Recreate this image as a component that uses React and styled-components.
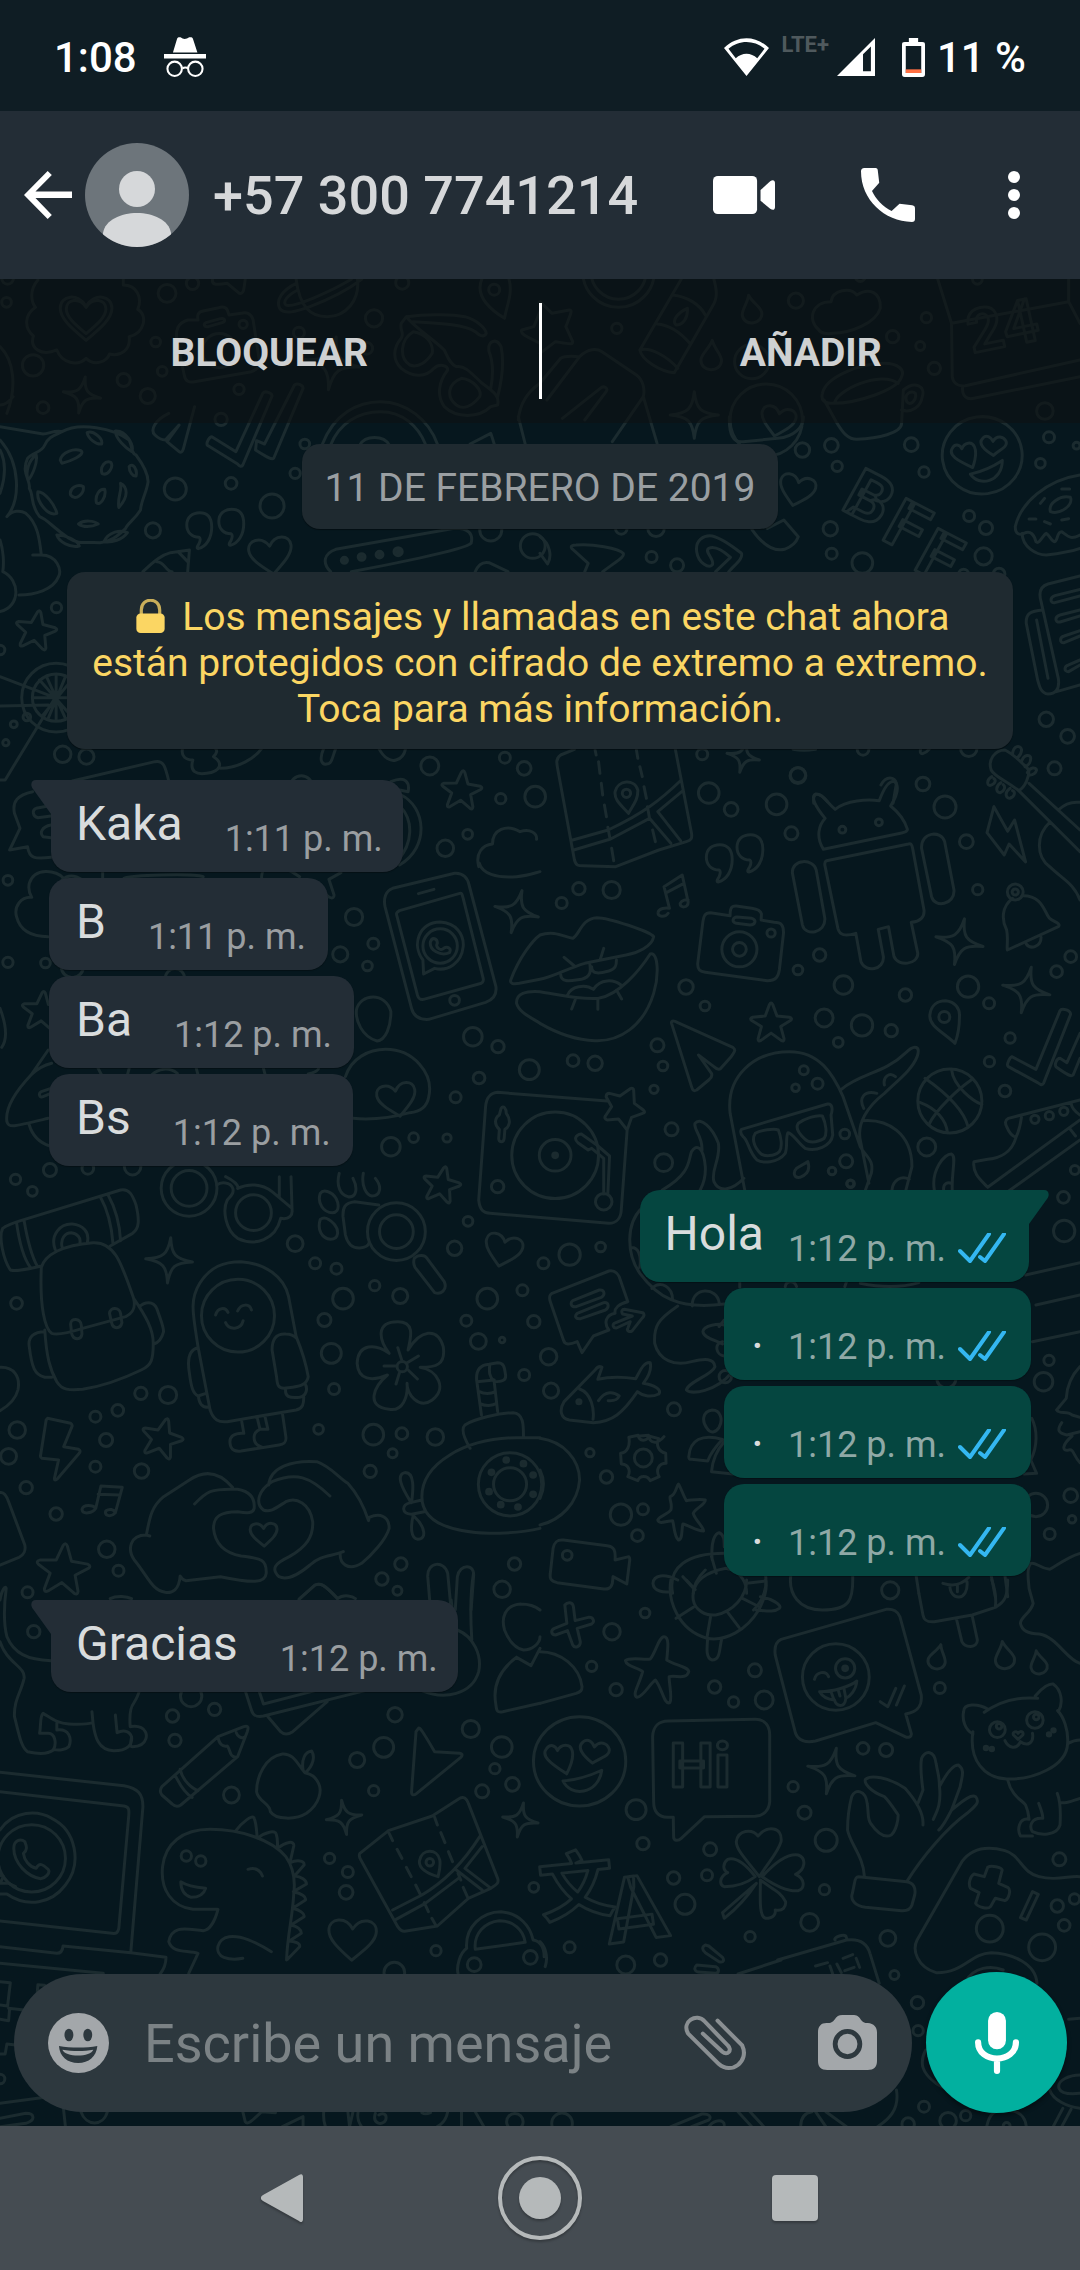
import React from 'react';
import styled, { createGlobalStyle } from 'styled-components';

const GlobalStyle = createGlobalStyle`
  * {
    box-sizing: border-box;
  }

  body {
    margin: 0;
    background: #06171e;
    font-family: Roboto, 'Noto Sans', sans-serif;
  }

  button {
    display: flex;
    align-items: center;
    justify-content: center;
    padding: 0;
    border: none;
    background: none;
    color: inherit;
    font-family: inherit;
    cursor: pointer;
  }

  svg {
    display: block;
    flex-shrink: 0;
  }
`;

const Page = styled.div`
  display: flex;
  flex-direction: column;
  min-height: 100vh;
`;

const StatusBar = styled.div`
  display: flex;
  align-items: center;
  height: 111px;
  padding: 3px 54px 0;
  background: #0f1d24;
  color: #fff;
  font-size: 42px;
  font-weight: 500;
`;

const StatusGroup = styled.div`
  display: flex;
  align-items: center;
  gap: ${props => props.$gap}px;
  margin-left: ${props => (props.$end ? 'auto' : '0')};
`;

const NetworkType = styled.span`
  align-self: flex-start;
  margin-right: -4px;
  color: #4f595d;
  font-size: 22px;
  line-height: 14px;
  font-weight: 700;
`;

const Header = styled.header`
  display: flex;
  align-items: center;
  height: 168px;
  padding: 0 51px 0 24px;
  background: #232d36;
  color: #fff;
`;

const BackLink = styled.button`
  margin-right: 13px;
`;

const Title = styled.h1`
  flex: 1;
  margin: 0 0 0 23px;
  color: #d6d8da;
  font-size: 54px;
  font-weight: 500;
  white-space: nowrap;
`;

const HeaderActions = styled.div`
  display: flex;
  gap: 78px;
`;

const HeaderButton = styled.button`
  width: ${props => (props.$narrow ? 30 : 66)}px;
  height: 66px;
`;

const Chat = styled.main`
  position: relative;
  display: flex;
  flex: 1;
  flex-direction: column;
  overflow: hidden;
  background: #06171e;
`;

const Wallpaper = styled.svg`
  position: absolute;
  inset: 0;
  width: 100%;
  height: 100%;
  fill: none;
  stroke: #1b2b2f;
  stroke-width: 3;
  stroke-linecap: round;
  stroke-linejoin: round;

  & * {
    vector-effect: non-scaling-stroke;
  }
`;

const ContactActions = styled.div`
  position: relative;
  display: flex;
  align-items: center;
  height: 144px;
  background: rgba(13, 17, 18, 0.6);
`;

const ContactAction = styled.button`
  flex: 1;
  height: 96px;
  padding-top: 4px;
  color: #cfd1d2;
  font-size: 39px;
  font-weight: 700;
`;

const Divider = styled.div`
  width: 3px;
  height: 96px;
  background: #fff;
`;

const Conversation = styled.div`
  position: relative;
  display: flex;
  flex: 1;
  flex-direction: column;
  padding: 21px 49px 24px;
`;

const DateChip = styled.div`
  align-self: center;
  padding: 4px 23px 0;
  border-radius: 18px;
  background: #1f2a30;
  box-shadow: 0 1px 1px rgba(0, 0, 0, 0.4);
  color: #9a9fa2;
  font-size: 39px;
  line-height: 81px;
`;

const Notice = styled.p`
  align-self: center;
  max-width: 946px;
  margin: 43px 0 7px;
  padding: 22px 16px 17px;
  border-radius: 18px;
  background: #1f2a30;
  box-shadow: 0 1px 1px rgba(0, 0, 0, 0.4);
  color: #fbd663;
  font-size: 39px;
  line-height: 46px;
  text-align: center;

  svg {
    display: inline-block;
    margin: 0 7px 0 6px;
    vertical-align: -3px;
  }
`;

const MessageGroup = styled.div`
  display: flex;
  flex-direction: column;
  align-items: ${props => (props.$own ? 'flex-end' : 'flex-start')};
  gap: 6px;
  margin-top: 24px;
`;

const Bubble = styled.div`
  position: relative;
  display: flex;
  align-items: flex-end;
  gap: ${props => (props.$own ? 24 : 42)}px;
  margin: 0 ${props => (props.$tail ? 2 : 0)}px;
  padding-top: 16px;
  padding-bottom: 12px;
  padding-left: ${props => (props.$tail ? 25 : 27)}px;
  padding-right: ${props => (props.$own ? 3 : 0) + (props.$tail ? 20 : 22)}px;
  border-radius: 20px;
  border-top-left-radius: ${props => (props.$tail && !props.$own ? 0 : 20)}px;
  border-top-right-radius: ${props => (props.$tail && props.$own ? 0 : 20)}px;
  background: ${props => (props.$own ? '#054640' : '#232d36')};
  box-shadow: 0 1px 1px rgba(0, 0, 0, 0.3);
`;

const Tail = styled.svg`
  position: absolute;
  top: 0;
  ${props => (props.$own ? 'right: -20px; transform: scaleX(-1);' : 'left: -20px;')}
  fill: ${props => (props.$own ? '#054640' : '#232d36')};
`;

const MessageText = styled.span`
  margin-bottom: 8px;
  color: #d9dcdd;
  font-size: 48px;
  line-height: 56px;
`;

const MessageTime = styled.time`
  display: flex;
  align-items: center;
  gap: 12px;
  color: ${props => (props.$own ? '#8fa9a6' : '#9a9ea1')};
  font-size: 36px;
  line-height: 42px;
`;

const Composer = styled.form`
  position: relative;
  display: flex;
  align-items: center;
  gap: 14px;
  padding: 0 13px 13px 14px;
`;

const ComposerField = styled.div`
  display: flex;
  flex: 1;
  align-items: center;
  min-width: 0;
  height: 138px;
  padding: 0 35px 0 34px;
  border-radius: 69px;
  background: #2d383e;
`;

const ComposerInput = styled.input`
  flex: 1;
  min-width: 0;
  margin: 0 34px 0 35px;
  padding: 2px 0 0;
  border: none;
  outline: none;
  background: none;
  color: #d9dcdd;
  font-family: inherit;
  font-size: 54px;

  &::placeholder {
    color: #7b8285;
    opacity: 1;
  }
`;

const AttachButtons = styled.div`
  display: flex;
  gap: 71px;
`;

const MicButton = styled.button`
  width: 141px;
  height: 141px;
  border-radius: 50%;
  background: #02b09f;
  box-shadow: 0 3px 4px rgba(0, 0, 0, 0.4);
`;

const NavBar = styled.nav`
  display: flex;
  align-items: center;
  justify-content: center;
  gap: 165px;
  height: 144px;
  background: #454c52;
  color: #b5b9ba;
`;

const NavButton = styled.button`
  width: 90px;
  height: 90px;
  filter: drop-shadow(0 2px 1px rgba(0, 0, 0, 0.25));
`;

const Icon = ({ w, h, box, children }) => (
  <svg width={w} height={h} viewBox={box} preserveAspectRatio="none" fill="currentColor" aria-hidden="true">
    {children}
  </svg>
);

/* Doodles that repeat over the wallpaper, drawn around 0,0 in a 100 unit box */
const shapes = {
  heart: 'M0 44C-30 18-50 0-50-20C-50-46-16-52 0-24C16-52 50-46 50-20C50 0 30 18 0 44Z',
  spark: 'M0-50C4-13 13-4 50 0C13 4 4 13 0 50C-4 13-13 4-50 0C-13-4-4-13 0-50Z',
  star: 'M-4-46Q0-54 4-46L14-18L44-15Q52-12 46-7L23 8L31 38Q31 46 24 42L0 24L-24 42Q-31 46-31 38L-23 8L-46-7Q-52-12-44-15L-14-18Z',
  drop: 'M0-50C8-22 34-2 34 18C34 38 18 50 0 50C-18 50-34 38-34 18C-34-2-8-22 0-50Z',
  quote: 'M0 18C-20 18-33 4-33-16C-33-38-18-50 2-50C24-50 34-34 34-10C34 20 20 44-2 50C-8 50-4 42 0 36Q6 22 0 18Z',
  face: 'M0-50A50 50 0 1 1 0 50A50 50 0 1 1 0-50ZM-14 14C-32 2-42-6-36-14C-32-20-26-18-24-12C-20-20-10-20-8-12C-6-4-10 6-14 14ZM14 2C4-6-4-16 4-22C9-26 14-22 16-16C22-24 30-20 32-14C34-6 22-4 14 2ZM-18 22Q4 20 24 10C20 38-10 40-18 22Z',
};

const tiles = [
  {
    x: 0,
    y: 0,
    dots: [[22, 835, 17], [19, 907, 14], [485, 880, 26], [559, 850, 18], [452, 1026, 14], [96, 1096, 31], [359, 1140, 19], [471, 1114, 14], [429, 1188, 22], [125, 1223, 17], [694, 1168, 15], [868, 998, 16], [1086, 955, 25], [1168, 848, 19], [1065, 1045, 17], [642, 1258, 18], [706, 973, 12], [637, 1052, 50], [1435, 869, 16]],
    stamps: [['heart', 250, 955, 150], ['heart', 250, 950, 115], ['spark', 238, 1185, 110, 10], ['spark', 965, 1090, 160, 8]],
    paths: [
      'M110 840C85 870 90 905 103 922C70 945 70 985 97 1008C85 1045 120 1070 165 1050C180 1090 225 1100 250 1075C275 1100 310 1085 318 1062C350 1070 380 1050 375 1010C420 1000 430 945 400 928C415 890 395 855 358 855V838',
      'M545 960C515 970 510 990 513 1020L535 1125C538 1145 550 1148 565 1145L730 1115C750 1108 758 1095 752 1075L735 960C730 940 715 935 700 940L665 945L660 930C655 920 645 920 635 923L590 933C575 936 572 945 575 960ZM598 968L640 956C655 953 655 965 645 968L605 980C592 982 590 972 598 968Z',
      'M860 838C870 920 900 950 950 950C1005 950 1045 900 1038 838M860 850C820 870 800 900 812 925C825 945 860 935 900 920C950 900 1010 870 1050 838M865 870C835 885 820 905 830 915C850 925 960 875 1020 838',
      'M617 840C615 855 630 855 660 850L695 880C708 882 708 870 712 838',
      'M1400 835C1380 880 1410 920 1465 955C1470 920 1490 880 1478 838',
      'M1568 935L1550 980L1515 990C1510 1000 1520 1005 1568 1030M1505 1260C1510 1200 1540 1170 1568 1150',
      'M1180 950C1250 940 1320 945 1350 950C1385 960 1410 985 1412 1000C1405 1015 1390 1005 1380 995C1350 975 1290 970 1200 965M1165 970C1160 990 1175 1000 1165 1015C1140 1045 1140 1080 1165 1105C1195 1130 1235 1135 1260 1105C1275 1090 1300 1095 1300 1110C1270 1150 1270 1190 1290 1220C1325 1255 1390 1255 1425 1220L1445 1215C1450 1190 1440 1180 1400 1150C1360 1110 1345 1095 1325 1100C1305 1090 1300 1070 1290 1050C1250 1010 1200 980 1180 950ZM1200 995C1235 1000 1260 1030 1255 1060C1240 1085 1215 1105 1190 1095C1160 1075 1160 1020 1200 995ZM1340 1135C1375 1140 1400 1170 1393 1190C1370 1220 1345 1230 1325 1215C1295 1190 1300 1150 1340 1135ZM1425 1165C1435 1110 1430 1080 1420 1055C1415 1025 1440 1010 1455 1040C1465 1090 1455 1150 1445 1190',
      'M0 1040C40 1080 50 1160 20 1240M0 1215Q20 1215 38 1190',
    ],
  },
  {
    x: 540,
    y: 0,
    dots: [[743, 902, 22], [1024, 1010, 18], [1122, 953, 15], [1104, 1038, 13], [1145, 1105, 18], [223, 985, 15], [1466, 1233, 24], [1270, 838, 14], [930, 830, 14], [228, 815, 104], [228, 815, 80], [615, 1085, 50], [657, 1260, 105]],
    stamps: [['drop', 613, 927, 84, -10], ['drop', 498, 1065, 88, 3], ['spark', 448, 1245, 140, 0], ['heart', 690, 1265, 100, 12]],
    words: [['24', 1255, 1060, 180, -12]],
    paths: [
      'M410 838L290 1050C295 1080 350 1115 390 1118L500 920C520 890 510 860 505 838M385 885C430 890 465 915 480 945M340 972C380 975 410 1000 435 1030M290 1050C320 1040 370 1070 400 1105M428 925C405 935 380 960 395 975C415 975 430 955 428 925Z',
      'M810 990C775 960 790 905 845 905C850 870 900 860 920 885C960 860 990 880 988 925C975 970 900 1000 850 1000C835 1003 815 1000 810 990Z',
      'M1155 838L1195 970L1197 1130C1200 1150 1215 1160 1235 1157L1568 1080M1195 970L1535 905V838M1535 905L1568 970M1227 1160C1225 1190 1240 1200 1260 1195L1568 1130',
      'M0 905L35 940L85 930C95 930 90 940 75 980L95 1025C95 1035 85 1032 45 1025L0 1060',
      'M0 1150L60 1075C75 1065 100 1070 115 1070C140 1045 165 1045 180 1055L280 1125C300 1140 305 1170 300 1190L210 1325M115 1070L20 1200M65 1255L175 1165C185 1155 200 1165 192 1175L130 1260M300 1190L340 1330',
      'M820 1180C830 1130 930 1090 1000 1090C1040 1090 1060 1110 1050 1130C1040 1170 920 1210 850 1210C825 1210 815 1200 820 1180ZM855 1210C860 1170 990 1110 1040 1150M825 1200L860 1265C880 1300 895 1318 920 1318C980 1315 1050 1300 1050 1270L1055 1170C1090 1140 1120 1160 1110 1190C1105 1220 1080 1240 1050 1230M1065 1205C1055 1180 1080 1170 1090 1180C1095 1200 1075 1220 1065 1205Z',
    ],
  },
  {
    x: 0,
    y: 420,
    dots: [[509, 207, 32], [671, 190, 17], [790, 258, 35], [857, 160, 15], [885, 72, 14], [444, 331, 22], [164, 563, 15], [182, 1003, 24], [251, 1010, 22], [78, 891, 11], [40, 913, 10], [17, 968, 9], [0, 690, 14], [1425, 330, 32], [1547, 378, 36], [1466, 1013, 16], [1248, 1038, 26], [1522, 1045, 20], [163, 833, 69], [163, 833, 100]],
    fills: [[1000, 421, 9], [1050, 411, 10], [1102, 404, 10], [1156, 395, 12]],
    stamps: [['heart', 787, 408, 124, -8], ['quote', 578, 332, 108, 0], ['quote', 671, 322, 108, 0], ['star', 104, 632, 122, 10]],
    paths: [
      'M180 35C230 5 330 25 375 60C385 80 380 100 395 105C420 140 430 165 430 185C425 220 410 240 408 270C390 300 370 310 365 325C340 350 320 365 290 368C250 365 230 375 200 355C150 320 140 300 115 290C85 250 100 230 85 205C90 180 60 160 80 115C95 95 120 100 130 75C140 50 160 45 180 35Z',
      'M175 120C180 95 215 85 235 92C250 105 200 125 180 130ZM253 38C270 30 300 55 295 72C280 75 255 55 253 38ZM335 33C365 30 390 75 383 95C365 85 335 55 335 33ZM296 160C290 140 305 120 322 127C330 140 315 170 296 160ZM375 140C385 125 400 150 395 168C385 170 375 155 375 140ZM205 225C200 205 225 190 242 200C245 220 220 245 205 225ZM280 248C275 225 290 205 304 208C310 230 290 260 280 248ZM350 190C370 200 375 230 345 262C340 230 355 215 350 190ZM110 215C130 215 160 255 165 280C140 290 105 245 110 215ZM228 312C245 298 275 303 285 312C265 322 240 322 228 312ZM165 345C190 345 225 360 230 378C205 385 170 365 165 345ZM302 365C315 335 350 328 370 338C355 360 325 368 302 365ZM105 105C110 125 95 165 82 180C72 155 85 120 105 105Z',
      'M615 50L685 95L763 -80C770 -90 790 -80 790 -72L705 135C700 142 695 138 690 132L602 76C598 68 608 50 615 50ZM745 62L768 72L855 -105C865 -112 880 -105 880 -95L795 114C790 120 780 115 742 90Z',
      'M935 75C970 -20 1040 -55 1105 -55C1180 -55 1245 0 1270 72M960 75C985 10 1040 -25 1105 -25C1170 -25 1215 20 1235 72M1045 75C1060 45 1115 45 1130 75',
      'M490 -20C450 0 435 30 450 45C465 60 475 60 480 60L520 15L485 65L520 95Q528 100 532 88L565 -40',
      'M415 455C450 420 470 405 495 398L550 390L545 455M455 425C480 425 480 455 500 455M517 395L545 425',
      'M960 455C935 430 940 400 975 388L1320 325C1360 325 1375 340 1368 370C1350 390 1100 440 1020 455',
      'M0 20L125 42C145 40 160 30 180 35M20 290C60 240 60 130 0 60M0 90C15 120 20 160 0 220M20 290C35 270 60 270 75 280C110 310 115 360 120 405H95M120 405C165 405 180 450 170 470C155 510 100 525 55 525M0 360C10 390 12 430 8 455C60 480 60 560 0 575',
      'M0 770L160 833L15 1080H0M0 858L140 855M163 765V900M95 833H200M115 780L200 880M200 790L125 885M135 770L190 895M190 770L140 895',
      'M210 1083L450 1025C475 1020 480 1040 490 1083M530 985C525 1010 540 1020 560 1020C550 1055 570 1065 600 1060C640 1055 650 1030 620 1010C630 1000 632 990 625 985M640 1045C690 1045 740 1015 760 985M940 985C925 1020 935 1035 948 1032C965 1032 965 1010 975 985M1100 985C1115 1015 1135 1025 1150 1020C1170 1015 1175 1000 1178 985',
      'M1365 72L1425 40Q1430 55 1435 72M1505 -10L1525 72M1380 455C1390 430 1405 425 1420 428L1475 455',
    ],
  },
  {
    x: 540,
    y: 420,
    dots: [[762, 90, 21], [846, 76, 20], [863, 139, 15], [1078, 74, 20], [1115, 156, 15], [843, 326, 21], [847, 401, 16], [936, 429, 30], [1246, 288, 16], [1295, 324, 19], [1288, 409, 25], [1478, 52, 16], [1453, 130, 14], [1558, 77, 10], [236, 325, 17], [337, 325, 24], [324, 411, 16], [398, 436, 19], [1333, 462, 17], [1230, 462, 14], [1470, 898, 21], [1532, 949, 20], [1494, 1045, 19], [471, 1003, 16], [749, 1065, 22], [938, 988, 17], [1245, 985, 24]],
    stamps: [['face', 1284, 106, 232, -8], ['heart', 745, 212, 104, 14], ['spark', 590, 1010, 96, 12]],
    words: [['B', 868, 265, 200, 28], ['F', 985, 355, 200, 28], ['F', 1078, 445, 200, 28]],
    paths: [
      'M1568 165C1470 180 1395 250 1380 320C1380 345 1395 345 1405 340C1425 330 1435 345 1440 365C1450 375 1460 345 1470 340C1480 345 1485 365 1495 365C1505 360 1500 335 1515 335C1535 350 1540 360 1568 345M1400 340C1400 380 1440 405 1470 405C1510 400 1540 395 1568 385M1482 275C1475 250 1510 225 1540 232C1550 255 1510 285 1482 275ZM1515 207H1538M1453 250L1465 235M1420 297H1440M1465 305L1482 312M1515 300L1535 296',
      'M130 455L140 430L92 385C88 378 95 375 105 375C150 370 230 385 242 400C245 410 235 415 182 455',
      'M455 395C450 360 475 345 500 348C530 355 560 380 585 400C590 415 570 430 548 455M455 395C460 430 490 445 500 435C510 420 475 395 490 385C510 375 540 400 553 412L510 455',
      'M615 328C650 380 680 395 710 388C735 378 745 365 750 350L708 300L660 325M0 350C30 370 35 410 22 432L0 400',
      'M550 -10C548 40 560 70 590 65L690 55C740 50 765 20 765 -10',
      'M1568 468L1475 492C1450 500 1448 520 1455 545L1505 775C1510 810 1495 822 1475 822C1455 820 1450 800 1445 780L1412 610C1410 580 1425 573 1460 570M1500 815L1568 795M1442 600L1475 775M1568 528L1495 548C1480 550 1480 532 1495 527L1568 508M1568 588L1510 606C1494 608 1494 590 1510 585L1568 570M1568 648L1522 668C1508 670 1508 652 1522 648L1568 632M1568 735L1535 755C1520 755 1522 738 1535 735L1568 720',
      'M735 988Q765 994 800 988M1105 988C1100 1010 1120 1000 1130 988',
      'M990 1095C1005 1065 1030 1070 1035 1090L1025 1150M795 1150C790 1115 810 1115 835 1145',
    ],
  },
  {
    x: 0,
    y: 770,
    dots: [[1454, 86, 15], [1293, 235, 24], [1358, 193, 14], [23, 331, 14], [23, 577, 15], [132, 579, 14], [1028, 441, 25], [988, 553, 22], [1084, 521, 16], [1067, 588, 14], [1373, 800, 27], [1446, 830, 18], [1537, 899, 29], [1391, 924, 17], [1323, 982, 16], [1135, 1130, 27], [1201, 1103, 14], [1298, 1104, 12], [145, 1200, 19], [255, 1195, 17], [385, 1190, 24], [45, 1228, 15], [1554, 80, 30], [1320, 691, 14], [1278, 528, 50], [875, 50, 32], [210, 590, 32], [508, 625, 28]],
    stamps: [['star', 1340, 62, 120, 5], ['spark', 1500, 425, 130, 14], ['star', 122, 724, 120, 5], ['heart', 1153, 990, 112, -10]],
    paths: [
      'M1390 290C1380 250 1400 225 1430 222C1430 180 1470 160 1510 185C1540 175 1560 190 1558 208M1392 280C1400 310 1440 325 1500 320C1530 318 1550 310 1568 305',
      'M1140 355L1320 310C1345 308 1358 325 1362 345L1440 650C1443 675 1430 690 1410 697L1245 748C1215 750 1200 735 1195 715L1118 410C1113 385 1120 362 1140 355ZM1160 422L1335 370C1342 368 1342 375 1345 385L1403 625C1405 635 1400 640 1390 642L1230 688C1218 690 1215 685 1212 675L1153 440C1150 430 1150 428 1160 422ZM1215 371L1260 358',
      'M1230 612L1228 570C1195 525 1215 458 1278 456C1325 458 1348 495 1345 530C1340 580 1300 605 1262 595ZM1250 515C1255 500 1270 505 1270 520C1262 530 1280 545 1288 535C1300 528 1312 535 1305 548C1280 560 1245 540 1250 515Z',
      'M1095 813C1050 800 1032 750 1035 720C1045 670 1120 665 1135 725C1135 770 1120 810 1095 813Z',
      'M1003 920C1020 865 1070 838 1120 838C1200 838 1260 910 1245 980C1240 1010 1220 1025 1190 1028C1130 1045 1080 1050 1025 1045',
      'M1163 110C1200 150 1200 220 1155 270M1165 75C1235 110 1250 230 1160 285M1135 35C1180 15 1190 40 1185 65L1160 60M990 308L955 328L970 375C970 388 955 385 948 375',
      'M95 65C50 75 35 95 42 130L58 175L28 240L80 230C85 265 100 268 148 262M140 108L105 115C92 120 95 140 110 143L148 138M148 165C120 170 115 190 125 200L148 203',
      'M185 325C165 300 100 290 85 340C82 355 85 370 92 382C60 380 40 410 48 440C60 490 100 500 140 500M240 330C210 310 190 320 180 330M298 305V325M360 325C380 315 560 310 590 320M760 325C755 290 800 270 870 320',
      'M140 840L90 915C40 970 15 1020 20 1055C25 1075 40 1070 140 1045M90 915C110 895 130 885 150 880M85 1065C95 1100 120 1120 145 1128M148 955L120 965C110 970 115 985 125 980L148 970M285 895L295 915M375 895L370 915M440 915C460 895 490 890 515 910M570 895L575 915M765 895L770 915M895 912Q925 905 925 895M0 715C20 770 20 810 5 832',
      'M1455 1015C1462 1005 1470 1015 1470 1030C1485 1050 1480 1070 1466 1078L1464 1105C1462 1120 1448 1118 1448 1105L1450 1078C1435 1065 1435 1045 1450 1035Z',
    ],
  },
  {
    x: 540,
    y: 770,
    dots: [[490, 69, 30], [555, 118, 20], [687, 103, 30], [749, 17, 23], [730, 190, 19], [1112, 42, 20], [1176, 111, 32], [1238, 215, 20], [1271, 359, 15], [113, 356, 18], [63, 399, 16], [208, 360, 25], [424, 651, 21], [479, 708, 14], [812, 555, 18], [749, 600, 14], [881, 645, 27], [1061, 675, 18], [825, 744, 26], [935, 766, 31], [1020, 782, 18], [866, 817, 14], [1243, 650, 31], [1304, 700, 16], [1500, 605, 17], [1541, 560, 17], [1365, 804, 15], [1305, 875, 15], [1350, 963, 17], [341, 826, 19], [357, 888, 14], [96, 872, 17], [160, 880, 21], [331, 958, 12], [382, 1078, 19], [359, 1178, 26], [1123, 1131, 26], [1553, 1200, 13], [766, 901, 13], [806, 941, 16], [742, 953, 11], [885, 1092, 14], [889, 1174, 19], [848, 1203, 11], [901, 1241, 10], [878, 179, 10], [984, 157, 10], [579, 538, 51], [579, 538, 20], [671, 489, 12], [1380, 366, 23], [1380, 366, 9], [1174, 741, 16], [1190, 993, 93], [44, 1156, 126], [44, 1156, 46], [185, 1295, 24], [1437, 1048, 12], [1479, 1037, 12], [1521, 1024, 12], [251, 70, 12]],
    fills: [[44, 1156, 7]],
    stamps: [['quote', 520, 280, 112, 0], ['quote', 609, 250, 112, 0], ['spark', 1218, 515, 140, 12], ['spark', 1412, 660, 140, 12], ['star', 671, 760, 122, 0]],
    paths: [
      'M100 -62L60 -45C45 -35 48 -20 52 0L100 270C105 287 110 287 125 287L220 290L345 240L425 215C440 210 442 205 440 190L393 -62M95 210L198 180C300 130 350 90 410 30M98 240L205 207L318 145L380 220M318 145L312 110M408 212L342 125L415 62M257 130C235 105 215 90 218 65C225 30 275 25 284 60C285 90 270 105 257 130Z',
      'M160 -60L163 -45M170 -25L174 10M178 40L182 75M187 105L193 140M197 172L203 205M208 235L214 272M280 -60L284 -35M290 -10L297 20M302 50L309 85M327 180L335 215',
      'M823 238C800 200 810 165 828 145C800 110 785 80 800 72C820 70 830 95 857 118C890 90 950 88 985 92C1000 50 1015 30 1030 35C1045 50 1035 80 1018 108C1045 130 1060 155 1067 178C1067 185 1060 187 1050 189ZM832 272L1070 222C1078 220 1080 225 1082 235L1115 420C1117 440 1105 455 1078 457L1097 550C1097 585 1040 590 1028 560L1012 470L982 478L997 560C1000 600 945 610 932 575L917 490C885 500 870 495 865 475L828 290C825 278 828 274 832 272ZM733 310C730 265 795 265 802 300L827 445C830 490 770 500 762 465ZM1108 235C1105 185 1165 180 1175 215L1202 360C1205 405 1145 415 1137 380Z',
      'M372 430C365 442 340 442 343 427C345 415 365 412 376 415L360 350L413 315L430 395C432 415 405 415 407 400C412 390 425 388 430 390M367 368L418 340',
      'M552 437L495 428C478 428 475 440 473 455L458 580C457 600 465 605 480 607L660 632C685 632 692 620 695 600L707 490C708 465 700 457 680 457L642 450L643 432C640 420 630 417 615 415L570 408C555 407 552 415 552 437ZM572 441L615 445C630 450 625 465 610 465L570 460C555 455 560 442 572 441Z',
      'M0 495C40 480 70 500 95 505C115 495 120 445 165 443C200 443 320 485 330 500C325 530 280 550 250 555L130 580C80 595 40 620 0 628M0 665C60 675 120 690 170 685C230 675 290 600 320 552C345 545 345 620 330 670C300 770 230 815 160 812C100 810 50 790 0 760M60 612C60 640 90 632 120 628C150 620 147 600 145 585M150 590C150 615 175 610 200 603C220 597 222 585 222 570M80 675C90 650 130 640 155 658C175 625 215 628 235 645M70 562L100 588M185 535L175 568M102 690L92 717M168 687V718M222 660L237 687M0 495C-20 510 -60 560 -85 630C-88 640 -80 643 -60 640L0 628M0 665C-40 662 -70 670 -68 700C-60 730 -20 745 0 760',
      'M1372 385C1340 410 1340 450 1355 480C1360 505 1355 530 1357 540L1505 470C1515 460 1490 455 1480 445C1465 430 1460 375 1400 377M1412 522C1425 540 1455 530 1455 502',
      'M1318 110L1298 188L1348 255L1362 222L1410 276L1378 150L1358 184Z',
      'M1205 820C1170 785 1130 770 1132 735C1135 705 1155 692 1178 692C1205 695 1220 715 1218 740C1218 770 1212 800 1205 820Z',
      'M382 760C380 750 390 752 400 758L560 832C570 840 565 845 555 860L525 895C518 902 510 895 505 890L460 855L498 910C502 920 495 925 490 930L455 960C445 965 443 960 440 950Z',
      'M253 1080L228 1047L195 1050Q185 1045 190 1038L208 1010L192 980Q192 970 202 970L232 978L262 956Q272 952 272 962L274 1000L300 1020Q308 1028 298 1030L266 1042Z',
      'M600 1290L552 1030C540 920 620 845 725 845C810 845 850 910 880 980L930 1130C950 1165 970 1170 962 1210L945 1260M875 958C930 910 1000 910 1060 850C1090 820 1105 830 1095 860C1080 900 1040 930 1000 970C950 1010 920 1060 930 1110L955 1240M1000 945C995 920 1015 905 1032 920M940 1015C925 985 940 960 978 970M935 1052C1010 1045 1080 1090 1080 1190L1060 1270M1022 1260C1025 1230 1050 1215 1072 1228',
      'M585 1078L835 1002C850 1000 850 1020 845 1035L850 1095C845 1130 800 1145 770 1135C745 1115 735 1090 720 1088C712 1105 720 1130 712 1150C690 1180 645 1180 630 1170C605 1145 605 1110 590 1100C583 1092 580 1085 585 1078ZM625 1090C640 1080 680 1075 692 1080C700 1100 705 1130 695 1145C680 1160 650 1160 640 1150C620 1130 615 1105 625 1090ZM750 1060C770 1045 800 1035 820 1038C830 1060 835 1090 825 1105C800 1120 780 1118 770 1108C750 1090 740 1075 750 1060ZM778 1175C785 1200 775 1215 755 1222C735 1225 735 1205 745 1195Z',
      'M355 1260C440 1210 430 1170 440 1145C455 1120 475 1130 480 1190C482 1230 470 1250 465 1260M470 1145C475 1100 445 1080 450 1060C465 1040 500 1070 518 1120C525 1170 495 1200 505 1235C520 1270 560 1260 592 1225',
      'M1195 898C1200 950 1260 995 1283 1003M1118 925C1180 970 1230 1020 1243 1070M1103 997C1150 1015 1180 1050 1183 1088M1255 928C1210 960 1150 1020 1130 1062',
      'M195 993L0 977L-123 967C-148 970 -156 985 -158 1010L-178 1290C-175 1320 -165 1328 -145 1330L200 1360C225 1360 235 1340 236 1320L253 1080M120 1092C100 1095 100 1110 110 1118L140 1140L150 1135L185 1165V1272M120 1092L165 1125L202 1158L197 1272',
      'M1310 0C1300 -30 1320 -60 1350 -60C1380 -45 1410 -10 1420 0C1420 20 1410 50 1390 62C1350 30 1320 20 1310 0M1390 62L1568 245M1420 40L1568 180M1505 120C1525 100 1550 95 1568 97M1480 157C1440 195 1440 260 1480 290C1520 330 1550 340 1568 390',
      'M1312 20C1295 30 1298 48 1308 46C1322 42 1325 30 1318 26M1338 38C1320 50 1325 70 1337 68C1350 62 1352 50 1345 44M1365 55C1345 70 1355 88 1366 84C1380 78 1380 65 1372 62M1372 -48C1375 -75 1395 -75 1398 -62C1400 -48 1390 -40 1385 -35M1398 -25C1405 -48 1425 -48 1425 -35C1425 -20 1415 -12 1408 -10M1415 8C1422 -8 1440 -10 1442 0C1440 10 1430 15 1420 16',
      'M1370 860L1440 898L1510 722C1515 712 1545 722 1540 735L1462 940C1458 948 1450 942 1445 938L1360 890C1352 885 1365 862 1370 860ZM1568 865L1548 915C1543 920 1535 918 1500 892C1492 885 1500 865 1510 865L1530 878L1568 790',
      'M1568 990L1360 1045C1350 1050 1350 1060 1355 1070C1365 1095 1375 1100 1382 1102C1390 1085 1395 1065 1398 1042M1382 1102C1370 1150 1330 1165 1300 1168L1260 1175C1255 1210 1280 1230 1300 1252L1568 1050M1345 1275L1568 1110M1540 1078L1555 1098M1542 1000Q1545 1020 1568 1035',
      'M1145 1260C1135 1200 1175 1150 1195 1152C1210 1160 1195 1200 1197 1260M1172 1260C1170 1240 1185 1235 1194 1240',
    ],
  },
  {
    x: 0,
    y: 1180,
    dots: [[857, 191, 23], [915, 250, 16], [977, 266, 16], [996, 356, 30], [1088, 317, 15], [1162, 348, 22], [942, 420, 19], [962, 520, 29], [970, 627, 16], [1359, 124, 14], [1320, 205, 21], [1415, 356, 30], [1517, 331, 16], [1354, 422, 16], [1389, 484, 23], [1458, 480, 8], [1550, 425, 18], [1522, 585, 16], [1084, 764, 30], [1167, 761, 17], [1264, 771, 24], [1140, 820, 13], [1075, 874, 18], [925, 748, 14], [94, 34, 14], [48, 370, 17], [409, 640, 18], [488, 645, 25], [342, 691, 17], [277, 710, 16], [50, 750, 24], [25, 829, 23], [308, 780, 19], [277, 860, 16], [411, 873, 21], [76, 923, 18], [163, 1002, 18], [310, 1108, 24], [344, 1172, 16], [80, 1237, 16], [1164, 1152, 18], [1109, 1197, 18], [1154, 1232, 13], [1494, 1152, 18], [1458, 1228, 24], [1445, 20, 18], [549, 25, 81], [549, 25, 52], [736, 98, 52], [1151, 155, 84], [1151, 155, 49], [691, 407, 106], [1481, 913, 92], [1481, 913, 48], [1168, 560, 15]],
    fills: [[1470, 840, 7], [1520, 851, 7], [1548, 885, 7], [1548, 943, 7], [1504, 981, 7], [1454, 974, 7], [1420, 935, 7], [1427, 877, 7]],
    stamps: [['spark', 491, 241, 136, 4], ['star', 470, 776, 124, 15], ['star', 183, 1170, 158, 5], ['star', 1282, 15, 112, 12], ['heart', 1460, 212, 108, 14], ['heart', 766, 1064, 78, -2]],
    paths: [
      'M8 145C20 135 35 130 60 122L350 30C375 25 385 45 395 75C405 120 405 145 385 160L320 198M8 145C-5 170 10 240 30 270C45 275 70 270 120 258M48 128C55 180 65 230 88 262M70 122C78 170 88 220 108 258M292 52C315 95 325 150 328 190M314 45C338 90 348 140 350 182M160 208C145 165 175 130 210 132C240 135 260 155 254 185M180 200C175 175 190 158 207 158C225 160 235 175 232 188',
      'M120 262C130 225 180 195 270 188C330 185 350 240 388 355C395 385 385 400 365 410L240 445C200 458 165 465 150 460C130 445 115 380 120 262ZM130 450C135 530 145 570 165 605C180 630 200 632 240 628C300 618 370 590 410 570C440 555 445 540 445 490C445 450 425 410 388 355M130 455C100 455 80 470 85 500C92 560 100 585 130 592H150M405 380C420 365 445 362 455 385C470 430 475 440 475 455C470 475 460 488 447 492M205 432C205 412 235 415 236 435L238 462C235 482 212 480 208 460ZM318 400C320 380 348 382 350 400L354 428C350 448 328 448 324 428Z',
      'M575 500C560 400 550 360 580 310C610 260 650 245 700 245C770 250 825 290 838 350L860 470C880 520 890 560 895 590C890 620 860 620 825 625C805 625 805 610 803 590L790 510C790 480 800 460 830 462C845 462 855 468 862 475M575 500L610 690C620 720 635 728 660 725L860 690C880 685 882 670 882 652M575 503C545 510 545 550 550 580C555 620 560 640 575 648L598 640M576 648C578 670 585 682 605 682M830 625C825 650 840 655 870 652C890 648 895 625 885 610M702 725L708 760C680 758 665 770 668 790C670 812 685 815 700 813L810 795C828 792 832 785 830 770L820 700M748 718L755 748M755 748L778 748L770 712M755 748C738 755 735 770 740 785C745 798 755 800 762 802M626 405C632 382 655 380 662 397M690 393C700 370 725 370 730 390M655 428C665 452 700 450 706 422',
      'M630 15C640 5 670 5 676 25C680 40 670 48 660 60C645 90 655 150 690 175C740 200 800 180 815 115C840 120 850 105 848 90L845 -10M690 25C720 10 760 10 790 35L848 85M811 -10V50M655 -10C675 0 690 10 692 25',
      'M1100 75L1030 65C1000 68 995 85 996 110L1003 165C1010 195 1025 205 1045 204C1065 203 1070 195 1072 188M1203 235C1215 222 1235 225 1240 235L1290 305C1300 330 1280 345 1262 338L1205 262C1200 252 1200 245 1203 235ZM930 40C920 70 940 98 965 98C990 98 985 60 965 42C950 32 938 28 930 40ZM930 118C920 150 935 175 960 178C985 178 985 150 970 132C955 115 940 110 930 118ZM985 -20C975 20 990 45 1010 50C1035 55 1040 25 1025 -5M1055 -20C1048 20 1065 45 1080 48C1105 48 1110 20 1090 -5',
      'M1130 520C1100 480 1090 425 1155 425C1210 425 1190 480 1185 510C1220 450 1270 440 1287 500C1295 555 1265 562 1220 562C1270 570 1300 625 1255 660C1215 690 1180 640 1182 610C1185 650 1170 695 1130 688C1060 680 1085 620 1125 585C1080 605 1040 600 1037 550C1040 490 1090 490 1130 520ZM1168 545L1155 503M1180 550L1215 528M1185 570L1212 597M1160 578L1150 612M1150 558H1115',
      'M1225 950C1225 850 1350 775 1500 773H1568M1225 950C1225 1020 1290 1055 1420 1060C1480 1060 1530 1055 1568 1045M1365 805C1345 770 1340 745 1350 735C1380 715 1450 700 1490 698C1520 700 1520 735 1520 768M1398 705L1384 600C1382 570 1395 555 1420 553L1445 548C1465 548 1465 565 1468 585C1470 600 1460 605 1435 605C1420 590 1420 575 1422 555M1435 605L1445 695M1385 605L1435 600M1392 635C1405 642 1425 642 1438 635M1396 672C1410 678 1430 678 1442 670M1192 965C1165 920 1150 885 1175 878C1205 875 1200 930 1195 968M1225 960L1192 968C1165 975 1165 1000 1195 1003L1232 995M1200 1005C1192 1040 1192 1075 1213 1078C1240 1078 1235 1040 1203 1010',
      'M435 1068L425 1065C435 1010 440 980 475 950L550 900C600 865 640 880 675 922M565 972C600 935 610 925 690 928C730 935 740 960 738 985C735 1000 720 1000 690 995C640 995 620 1010 620 1045C625 1100 660 1120 700 1128C760 1135 775 1140 773 1180C770 1210 735 1210 640 1190L540 1202Q530 1200 523 1188C520 1230 500 1240 480 1237C440 1230 430 1190 390 1140C370 1110 375 1065 425 1065',
      'M780 915C785 860 850 840 920 845C960 860 980 890 1010 910C1045 950 1060 990 1070 1022L1072 1012C1100 1000 1130 1005 1130 1045C1120 1080 1080 1125 1050 1150C1010 1175 985 1150 988 1118L997 1115C960 1130 930 1125 900 1155C860 1190 830 1200 810 1190C785 1165 800 1150 840 1130C890 1100 910 1070 908 1025C900 970 860 950 830 965C800 985 785 998 765 990C740 970 750 930 790 905C860 875 900 890 958 948',
      'M138 715L205 730Q212 735 208 742L185 800L228 808Q236 812 230 820L168 895Q158 905 158 895L170 840L122 835Q116 832 118 825L134 720Z',
      'M278 985C270 1000 240 1005 238 988C242 972 270 975 278 985L293 918L355 922L335 998C320 1015 300 1005 308 992C318 985 330 988 335 998M285 943L348 945',
      'M0 562C40 560 60 590 52 630C45 660 20 680 0 692M0 938C10 935 18 945 25 965L72 1095C75 1110 70 1125 55 1132L0 1155',
      'M1250 1290L1242 1190C1240 1145 1290 1140 1300 1180L1310 1290M1322 1290L1328 1190C1335 1150 1380 1150 1375 1190L1368 1290M870 1256L915 1215C930 1208 940 1212 980 1256C1000 1240 1025 1250 1032 1256M320 1256C340 1245 370 1250 382 1256',
    ],
  },
  {
    x: 540,
    y: 1180,
    dots: [[1520, 52, 17], [1522, 153, 31], [86, 224, 31], [176, 201, 14], [10, 250, 16], [25, 530, 24], [32, 632, 22], [389, 688, 19], [145, 818, 12], [193, 891, 18], [235, 1004, 31], [299, 988, 16], [283, 1067, 17], [1478, 541, 15], [1462, 605, 27], [1440, 975, 34], [1541, 947, 20], [1545, 1018, 11], [1480, 1062, 16], [1017, 1231, 25], [902, 11, 11], [300, 834, 26], [79, 1126, 14], [538, 590, 18], [1180, 595, 28]],
    fills: [[113, 665, 6]],
    paths: [
      'M35 340L200 273C215 270 225 280 230 290L255 365C230 370 215 385 218 400C190 405 185 430 200 450L155 468L122 518L108 485C85 495 72 495 68 480L30 365C25 350 28 345 35 340ZM95 362L172 330C188 328 190 345 178 352L105 380C88 382 88 368 95 362ZM108 400L185 368C200 366 202 382 190 390L118 416C102 418 100 408 108 400ZM215 430L268 408L240 402C235 395 238 388 245 388L298 398C305 402 302 410 296 415L268 452C260 458 250 452 255 445L262 425L222 444C212 445 210 435 215 430Z',
      'M180 562Q170 555 160 570L70 665C55 690 60 715 85 720L155 728C210 725 240 700 283 635C300 650 325 652 345 642C355 628 330 615 300 610C315 590 325 570 320 548C300 545 290 575 278 596C240 590 200 590 168 598ZM115 627C150 640 158 690 154 718M170 662C190 630 215 635 230 648C225 660 210 663 198 662',
      'M290 768L315 766C318 790 340 795 360 770M258 772L285 766C288 785 310 785 316 768L345 776C335 795 345 815 365 820L366 850C345 850 335 870 346 890L320 902C312 885 290 885 284 902L255 890C265 870 255 852 236 852L234 820C255 818 262 795 258 772',
      'M402 912C410 925 415 945 425 962C445 960 465 955 480 960C480 975 450 985 445 1000C450 1020 475 1040 475 1053C460 1055 430 1035 415 1032C410 1050 415 1078 402 1080C390 1070 390 1040 385 1022C370 1022 345 1035 342 1020C350 1005 370 1005 380 990C385 970 375 960 378 950C395 945 395 920 402 912Z',
      'M68 1080L195 1097C215 1100 220 1110 218 1140L258 1130Q262 1135 260 1145L252 1212L212 1190L210 1210C205 1228 195 1228 180 1226L50 1208C30 1203 28 1195 30 1180L38 1105C42 1085 50 1078 68 1080Z',
      'M0 775C70 785 115 840 115 900C110 970 60 1020 0 1035M0 870Q20 912 0 955',
      'M535 435C520 430 475 435 473 455C475 475 510 480 530 492M535 420L520 440M530 485C505 490 510 525 535 528M400 378C340 420 330 440 333 490C345 540 390 560 440 545C480 535 505 535 508 560C500 585 430 605 425 630C440 645 510 635 555 580M295 85C250 130 250 220 290 280C340 350 400 390 535 372M262 203C285 200 295 225 290 262M325 325C350 300 385 320 385 360M442 378C440 320 515 320 520 368M580 305V322M712 320C715 300 740 300 745 320M890 305L885 320M930 310C1000 325 1060 320 1100 308',
      'M500 690C470 695 470 725 485 745C495 762 510 758 520 742C532 720 525 690 500 690ZM432 830C435 780 470 760 530 778C510 800 495 820 487 843L440 838C432 838 432 835 432 830ZM535 785C505 820 500 850 498 875L560 882',
      'M1410 285L1568 248M1440 375L1568 345M1430 485L1568 455M1568 560C1540 590 1530 620 1528 655L1500 690C1510 705 1530 690 1545 705L1568 712M1515 728C1500 750 1505 760 1530 765L1568 755M1545 768C1515 795 1515 815 1535 810C1550 805 1550 830 1568 848M1428 715C1445 750 1445 800 1425 840L1442 880L1405 882',
      'M385 1240C370 1160 430 1120 535 1120M445 1240C450 1195 490 1175 540 1165C590 1175 600 1215 600 1240M400 1200C360 1180 330 1185 328 1210C330 1235 360 1238 380 1235M415 1190L450 1230M498 1130L512 1180M500 1140C495 1080 510 1060 520 1058C535 1065 535 1080 535 1100M655 1186C660 1220 650 1260 620 1290M600 1210L655 1203M728 1188C722 1240 750 1290 820 1290C900 1290 910 1260 908 1188M1092 1186L1100 1240M1310 1186L1322 1250M1350 1186L1358 1250M1170 1210Q1215 1225 1245 1192M1190 1215C1190 1265 1245 1265 1240 1205M1212 1215V1235',
      'M1568 1120C1530 1130 1490 1165 1480 1168C1450 1165 1440 1145 1425 1150C1410 1165 1420 1210 1420 1225L1432 1270C1425 1300 1395 1310 1395 1330C1400 1360 1430 1362 1450 1362C1500 1370 1530 1440 1568 1450',
    ],
  },
  {
    x: 0,
    y: 1580,
    dots: [[98, 155, 18], [555, 348, 31], [623, 388, 18], [501, 408, 18], [508, 481, 18], [672, 645, 23], [1147, 404, 21], [1114, 502, 29], [1037, 540, 22], [1085, 632, 15], [1367, 447, 25], [1457, 501, 30], [1437, 566, 15], [1488, 613, 20], [1400, 634, 19], [957, 835, 15], [1010, 876, 16], [1005, 937, 20], [1550, 922, 14], [1266, 1112, 15], [541, 828, 15], [583, 843, 15], [1248, 847, 11], [92, 835, 98]],
    stamps: [['spark', 999, 712, 104, -8], ['spark', 1511, 720, 104, 10], ['heart', 1023, 1080, 138, 2]],
    paths: [
      'M0 185C20 250 75 260 70 295C60 340 40 360 42 410C55 460 60 500 80 515C110 522 140 522 155 510C165 490 160 460 140 460H115C120 430 115 410 125 400C150 415 165 430 200 432C230 434 255 432 270 428L267 395M270 428C275 470 285 510 330 512C370 512 385 495 382 470C375 450 355 450 340 458L335 405M382 470C380 490 375 500 385 500C430 500 435 455 410 443C395 435 380 440 378 440C375 400 380 380 388 370C400 350 403 340 405 330M165 425V450C200 445 210 475 200 500C190 510 170 512 155 508M0 60C5 30 15 15 18 25C10 90 10 130 20 170C40 220 80 240 148 242',
      'M0 577L360 617C400 625 415 640 415 680L380 1115M0 635L360 678C375 680 375 690 374 705L345 1045C342 1058 338 1062 325 1060L0 1023M0 1100L165 1120C178 1120 182 1110 183 1098L380 1118L482 1132C482 1150 478 1165 465 1182M0 1150L300 1180M0 750C40 690 110 690 150 715C220 750 240 850 190 915C150 970 80 985 20 942H0M0 885L10 890L0 910H25L45 920M40 805C40 780 60 775 72 785C78 800 80 810 68 820C70 840 85 860 105 865C115 845 125 855 140 868C148 880 130 895 118 896C80 890 40 850 40 805Z',
      'M633 470L708 440C722 436 722 442 718 455L690 530L525 675C515 682 508 680 500 672L470 645C462 635 465 628 470 620ZM633 470C635 490 645 502 660 498C670 510 665 530 685 532M686 458C690 470 700 475 708 472M508 585C520 610 535 640 558 652M523 568C530 600 555 625 575 632',
      'M712 332L730 390C735 408 745 412 765 408L1060 332M752 332L765 372L915 332M778 410L815 455C825 465 835 465 850 455L950 365M1225 332C1290 360 1370 345 1390 275C1400 225 1375 170 1328 150M1310 60L1320 150M1375 -20C1365 40 1365 100 1370 180M868 58L915 15C930 8 940 12 980 55',
      'M885 578C860 545 850 520 820 522C770 530 745 590 745 635C750 665 785 670 785 695C800 720 860 720 890 700C930 670 935 630 925 610C915 590 905 582 885 578ZM880 570C875 540 885 515 905 513C915 530 910 555 888 577',
      'M1215 445C1218 440 1225 450 1262 515L1335 520C1345 522 1342 528 1338 532L1210 640C1200 648 1195 645 1195 635L1208 455Z',
      'M630 988H560C500 980 465 930 472 860C480 790 530 748 610 748C700 748 790 780 830 830C850 860 858 900 853 940C850 1010 835 1060 832 1140M633 988C625 1020 610 1050 590 1052C550 1050 500 1030 490 1085C500 1120 540 1110 575 1120L548 1180M685 752C700 730 735 700 738 715C745 730 745 760 747 775C770 755 800 750 802 762C808 780 805 790 806 805C830 785 855 780 853 798L842 848C860 840 885 840 883 855L855 888C875 890 890 900 890 912L852 935C875 940 890 950 887 960L850 985C870 990 885 1000 883 1010L845 1035C865 1040 875 1050 875 1060L840 1083C860 1085 872 1090 870 1100L835 1138M720 868C740 862 755 870 762 888M525 905C540 915 570 922 597 925C590 950 570 952 555 952C535 945 525 930 525 905ZM788 1115C740 1085 700 1065 665 1070C630 1075 620 1120 650 1132C670 1140 690 1138 705 1135',
      'M1045 820L1128 752L1255 708L1335 655C1345 648 1355 655 1360 670L1445 895C1450 910 1440 915 1425 925L1360 955L1270 1038L1175 1054C1165 1055 1160 1048 1155 1040L1048 840C1042 830 1042 825 1045 820ZM1140 990L1225 945C1300 900 1350 840 1393 770M1150 1018L1235 970L1335 892M1400 930L1325 870M1422 922L1350 865L1400 800M1272 890C1240 880 1215 865 1218 842C1225 805 1270 805 1277 840C1280 860 1275 875 1272 890Z',
      'M1130 760L1140 782M1153 808L1167 835M1180 862L1194 890M1207 915L1220 942M1232 968L1244 995M1254 1015L1265 1035M1262 712L1270 735M1280 758L1292 788M1302 815L1314 845M1330 880L1338 900M1345 922L1358 952',
      'M1355 1105C1350 1040 1400 995 1455 995C1510 1000 1540 1040 1548 1080C1575 1085 1580 1110 1580 1130M1380 1108C1375 1060 1410 1025 1450 1022C1490 1022 1520 1050 1525 1087ZM1355 1105C1335 1120 1325 1160 1330 1180',
      'M1512 72C1465 75 1455 115 1465 150C1480 190 1500 205 1520 210C1545 210 1568 190 1568 170M1568 90C1550 75 1530 72 1512 72M1500 232C1450 270 1430 320 1440 375C1442 395 1445 398 1460 395L1568 370M1500 232L1542 257L1568 205',
    ],
  },
  {
    x: 540,
    y: 1580,
    dots: [[209, 155, 24], [305, 99, 14], [150, 259, 15], [221, 329, 18], [507, 321, 18], [562, 366, 15], [624, 271, 19], [651, 360, 26], [1161, 324, 16], [938, 505, 17], [1005, 510, 19], [735, 620, 15], [768, 698, 19], [279, 689, 29], [299, 791, 18], [494, 808, 19], [485, 886, 16], [388, 894, 18], [421, 973, 29], [831, 781, 32], [826, 929, 15], [783, 1027, 26], [610, 1070, 15], [1010, 1075, 23], [86, 1102, 16], [350, 1140, 18], [249, 1155, 26], [1508, 838, 19], [1502, 978, 18], [1552, 957, 15], [1522, 1036, 17], [1306, 1046, 39], [1458, 1102, 39], [859, 291, 97], [886, 265, 28], [1328, 449, 23], [1437, 420, 24], [1441, 411, 8], [1333, 439, 8]],
    fills: [[886, 265, 7], [1295, 504, 5], [1312, 507, 5], [1478, 463, 5], [1491, 451, 5]],
    stamps: [['face', 115, 544, 268, 0], ['spark', 846, 573, 140, 12], ['drop', 1155, 230, 74, 14], ['drop', 1348, 225, 82, -8], ['drop', 1447, 247, 70, -10]],
    words: [['Hi', 375, 622, 185, 0], ['文', 5, 1010, 220, -6], ['A', 200, 1092, 270, -8]],
    paths: [
      'M72 75C80 65 95 65 97 80L102 122L140 112C155 110 160 125 150 132L108 145L117 185C118 202 100 205 95 195L80 152L45 165C32 165 30 150 42 145L78 130Z',
      'M360 170C375 170 372 200 368 240C390 255 430 260 432 275C425 300 395 285 375 290C375 315 385 355 377 368C360 375 355 325 335 300C320 310 300 350 282 352C265 345 290 310 298 275C285 262 250 260 248 242C260 230 300 240 320 237C335 220 345 170 360 170Z',
      'M0 215C60 215 115 260 122 320C122 332 118 335 105 340L0 370',
      'M380 0C370 60 400 150 485 175C540 185 600 150 635 90C655 50 660 20 655 0M445 60C440 20 460 -10 480 -30M445 60C450 90 480 108 510 105C560 95 600 50 600 0M445 82L395 115M495 112L485 172M545 97L578 142M588 55L632 78M487 175C485 200 480 235 500 240C525 240 520 205 528 175M640 50C670 55 705 75 695 85C680 98 655 92 628 90M425 0L450 28',
      'M700 178L1005 88C1025 85 1040 95 1045 110L1107 345C1110 375 1100 395 1062 402L1078 460C1080 470 1070 475 1060 470L975 428L800 483C770 490 750 480 742 460L683 225C680 200 685 185 700 178ZM797 298C802 275 830 270 838 290M812 335C850 335 900 320 920 303C918 330 900 350 888 355C885 385 860 380 855 360C835 358 820 350 812 335ZM845 335L853 358M882 322L888 355M866 330L871 348M988 365L1010 380L1033 325M1035 375L1058 318',
      'M1100 40L1112 105C1115 122 1125 127 1145 125L1255 105L1322 82C1350 65 1358 50 1358 0M1322 82C1325 60 1322 30 1312 0M1210 120L1225 185C1235 205 1270 205 1270 180L1255 108',
      'M372 423L625 418C655 418 667 440 667 465V665C665 695 645 707 625 709L478 710L410 775C400 785 388 782 388 770L387 712H370C340 710 330 690 330 665L327 470C328 440 345 423 372 423Z',
      'M637 890C600 840 570 810 570 785C575 750 615 745 633 768C660 735 705 740 700 785C690 820 660 850 637 890ZM625 890C595 850 570 830 545 838C530 850 530 870 545 878C520 890 520 915 535 920C570 920 600 910 625 890ZM645 890C680 850 720 820 750 825C775 835 770 870 742 883C770 895 770 925 750 932C720 935 680 915 645 890ZM640 900C640 950 635 1010 655 1015C680 1015 685 1000 683 990C705 995 715 980 713 965C700 935 670 925 640 900ZM628 910L530 998L535 1015Q590 970 628 910Z',
      'M942 890C940 830 900 790 893 750C893 700 900 670 905 650C915 625 945 630 950 670C955 700 950 715 960 730C980 760 1000 775 1020 765C1035 750 1040 720 1040 705C1030 690 1015 665 1000 650C960 635 940 610 945 598C960 585 1010 590 1060 625C1090 660 1115 700 1112 735M1098 668L1112 630C1108 600 1103 560 1108 535C1120 510 1145 510 1150 550C1155 580 1160 590 1160 620C1175 590 1195 555 1215 555C1235 570 1225 590 1220 620L1195 690C1180 720 1170 740 1158 750M1160 620C1165 670 1155 690 1142 718M1195 690C1220 670 1250 640 1265 650C1280 670 1260 680 1240 700C1180 745 1110 830 1065 905M925 890L1065 905C1085 908 1092 925 1088 945L1080 975C1075 990 1065 993 1050 992L945 982C915 978 900 960 907 940L913 910C915 895 920 890 925 890Z',
      'M1290 397C1340 360 1390 350 1445 355M1300 387C1270 370 1230 370 1230 395C1225 420 1235 450 1257 462M1257 455C1245 540 1290 595 1355 597C1430 600 1530 560 1532 490C1535 450 1520 410 1503 392M1438 348C1460 320 1480 310 1490 312C1515 330 1520 370 1505 395M1375 465C1370 455 1385 452 1388 460C1395 450 1405 455 1402 465L1388 478ZM1350 482C1360 505 1385 510 1395 485C1415 500 1435 490 1430 460M1358 600C1370 650 1400 660 1410 675C1420 700 1418 705 1420 718M1420 718C1390 712 1385 750 1395 768H1430M1448 670C1455 690 1460 700 1460 715C1425 712 1420 740 1430 755C1450 765 1500 770 1510 735C1512 700 1510 660 1502 640M1535 490C1550 480 1560 480 1568 480M1510 668C1530 672 1550 660 1568 655',
      'M1568 890C1540 885 1500 905 1450 890C1400 880 1395 825 1350 812C1290 795 1250 810 1225 845L1095 1080C1080 1110 1095 1160 1150 1178C1230 1180 1250 1120 1310 1118C1370 1120 1440 1150 1443 1210M1300 862C1310 855 1340 862 1342 870L1332 910L1358 922C1370 930 1360 958 1350 962L1322 955L1308 980C1300 990 1270 980 1265 970L1275 938L1250 925C1242 910 1250 888 1260 882L1290 890ZM1430 935L1447 943L1412 1020L1395 1013Z',
      'M690 1140L890 1080C930 1075 950 1090 958 1120L985 1210M857 1080C850 1072 880 1062 888 1068L892 1080M575 1182L700 1140M480 1095C470 1100 470 1110 480 1118L520 1145C535 1148 535 1140 530 1132L490 1098ZM455 1155C445 1165 450 1175 460 1176L510 1180C522 1178 520 1165 510 1160Z',
      'M0 1085C15 1100 25 1130 15 1160',
    ],
  },
  {
    x: 0,
    y: 1950,
    dots: [[0, 387, 14], [1145, 68, 30], [1377, 44, 20], [1540, 22, 20], [1495, 515, 24]],
    paths: [
      'M0 95L30 98L22 168L0 165M25 175L70 180M28 175L25 212L0 208M0 312H15L20 282L45 285M108 130L110 104L130 106M0 460L180 435L190 530M0 505L75 490C100 490 105 510 75 520L0 530M235 485C250 530 300 530 312 485M705 485L712 515C718 525 730 515 760 485L800 488M820 530L880 500V530M940 485Q938 510 945 530M1010 485L1015 530L1025 485M1040 485Q1035 510 1050 530M1090 490C1080 520 1110 530 1120 510C1125 490 1110 488 1100 495M1225 488Q1235 495 1250 488M1300 485Q1295 515 1270 530M1340 485V530M1380 485L1405 530',
    ],
  },
  {
    x: 540,
    y: 1950,
    dots: [[1029, 75, 13], [1096, 158, 18], [1098, 242, 15], [1115, 470, 16], [1236, 497, 15], [1185, 512, 24], [1069, 522, 18], [64, 520, 30], [1355, 528, 10]],
    paths: [
      'M800 48L835 38M842 48L850 72M862 42L875 68M880 25L908 14M918 25L928 52M885 62L912 52',
      'M1120 300C1100 340 1110 370 1150 400C1170 412 1190 425 1200 430M1035 420C1045 480 1010 510 980 530M380 530L470 492C490 490 500 500 490 510L440 530M490 530C510 505 535 510 535 525M575 485L615 530M610 485L650 530M757 530C757 500 770 488 790 485M800 485L830 530M830 485L890 530M1235 95C1260 50 1310 45 1345 60M1535 208L1568 205M1568 375C1540 375 1500 390 1507 415C1515 435 1550 432 1568 430M1480 420C1490 450 1530 470 1568 475M1518 475L1490 530M1542 478L1515 530M1297 530C1305 490 1320 480 1350 480C1390 480 1410 500 1412 530',
    ],
  },
];

const Doodles = () => (
  <Wallpaper viewBox="0 279 1080 1847" preserveAspectRatio="xMidYMin slice" aria-hidden="true">
    {tiles.map(tile => (
      <g key={`${tile.x}-${tile.y}`} transform={`translate(${tile.x} ${tile.y}) scale(.34439 .33333)`}>
        <path d={tile.paths.join('')} />
        {tile.dots.map(([x, y, r], i) => (
          <ellipse key={i} cx={x} cy={y} rx={r} ry={r * 1.03} />
        ))}
        {(tile.fills || []).map(([x, y, r], i) => (
          <circle key={i} cx={x} cy={y} r={r} fill="#1b2b2f" />
        ))}
        {(tile.stamps || []).map(([name, x, y, size, turn = 0], i) => (
          <path key={i} d={shapes[name]} transform={`translate(${x} ${y}) rotate(${turn}) scale(${size / 100})`} />
        ))}
        {(tile.words || []).map(([word, x, y, size, turn], i) => (
          <text
            key={i}
            transform={`translate(${x} ${y}) rotate(${turn})`}
            fontSize={size}
            fontWeight="700"
            fontFamily="Roboto, 'Noto Sans CJK SC', sans-serif"
          >
            {word}
          </text>
        ))}
      </g>
    ))}
  </Wallpaper>
);

const ReadTicks = () => (
  <Icon w={48} h={32} box="0 0 48 32">
    <path d="M2 18L12 28L31 1M22 24L27 28L46 1" fill="none" stroke="#34b7f1" strokeWidth="4" strokeLinecap="round" strokeLinejoin="round" />
  </Icon>
);

const groups = [
  {
    own: false,
    messages: [
      { text: 'Kaka', time: '1:11 p. m.' },
      { text: 'B', time: '1:11 p. m.' },
      { text: 'Ba', time: '1:12 p. m.' },
      { text: 'Bs', time: '1:12 p. m.' },
    ],
  },
  {
    own: true,
    messages: [
      { text: 'Hola', time: '1:12 p. m.' },
      { text: '.', time: '1:12 p. m.' },
      { text: '.', time: '1:12 p. m.' },
      { text: '.', time: '1:12 p. m.' },
    ],
  },
  {
    own: false,
    messages: [{ text: 'Gracias', time: '1:12 p. m.' }],
  },
];

const Message = ({ text, time, own, tail }) => (
  <Bubble $own={own} $tail={tail}>
    {tail && (
      <Tail $own={own} width="21" height="34" viewBox="0 0 21 34" aria-hidden="true">
        <path d="M21 0H5C0 0-1 5 2 9L20 34H21Z" />
      </Tail>
    )}
    <MessageText>{text}</MessageText>
    <MessageTime $own={own}>
      {time}
      {own && <ReadTicks />}
    </MessageTime>
  </Bubble>
);

const App = () => {
  return (
    <Page>
      <GlobalStyle />

      <StatusBar>
        <StatusGroup $gap={27}>
          <span>1:08</span>
          <Icon w={42} h={40} box="476 111 122 117">
            <path d="M502 156L514 116C516 111 520 112 524 112C532 118 540 118 549 112C554 111 558 111 560 116L573 156ZM476 161H598V174H476Z" />
            <path d="M530 203C534 199 542 199 546 203" fill="none" stroke="currentColor" strokeWidth="6" />
            <circle cx="507" cy="204" r="21" fill="none" stroke="currentColor" strokeWidth="6" />
            <circle cx="567" cy="204" r="21" fill="none" stroke="currentColor" strokeWidth="6" />
          </Icon>
        </StatusGroup>
        <StatusGroup $end $gap={27}>
          <StatusGroup $gap={12}>
            <Icon w={45} h={38} box="540 106 130 113">
              <path fillRule="evenodd" d="M605 219L540 136C578 97 632 97 670 136ZM574 166C592 148 618 148 636 166L657 138C627 111 583 111 553 138Z" />
            </Icon>
            <NetworkType>LTE+</NetworkType>
            <Icon w={38} h={38} box="862 109 111 112">
              <path fillRule="evenodd" d="M862 221L973 109V221ZM938 207H961V134L938 157Z" />
            </Icon>
          </StatusGroup>
          <StatusGroup $gap={12}>
            <Icon w={23} h={39} box="1051 108 67 117">
              <path fillRule="evenodd" d="M1071 108H1098V120H1110C1116 120 1118 122 1118 128V217C1118 222 1116 225 1110 225H1059C1053 225 1051 222 1051 217V128C1051 122 1053 120 1059 120H1071ZM1062 132V213H1107V132Z" />
              <path d="M1062 202H1107V213H1062Z" fill="#ff7043" />
            </Icon>
            <span>11 %</span>
          </StatusGroup>
        </StatusGroup>
      </StatusBar>

      <Header>
        <BackLink type="button" aria-label="Atrás">
          <Icon w={48} h={48} box="71 514 138 142">
            <path d="M209 575V594H104L151 644L139 656L71 585L139 514L151 526L104 575Z" />
          </Icon>
        </BackLink>
        <svg width="105" height="105" viewBox="0 0 105 105" role="img" aria-label="Foto de perfil">
          <defs>
            <clipPath id="avatar">
              <circle cx="52" cy="52" r="52" />
            </clipPath>
          </defs>
          <circle cx="52" cy="52" r="52" fill="#6d757b" />
          <g fill="#d6d8da" clipPath="url(#avatar)">
            <circle cx="52" cy="46" r="18" />
            <path d="M18 90C20 77 36 70 52 70C68 70 84 77 86 90V105H18Z" />
          </g>
        </svg>
        <Title>+57 300 7741214</Title>
        <HeaderActions>
          <HeaderButton type="button" aria-label="Videollamada">
            <Icon w={62} h={38} box="502 528 180 114">
              <rect x="502" y="528" width="128" height="114" rx="14" />
              <path d="M640 570L668 544C676 538 682 541 682 550V620C682 630 676 632 668 626L640 602Z" />
            </Icon>
          </HeaderButton>
          <HeaderButton type="button" aria-label="Llamar">
            <Icon w={54} h={54} box="932 504 157 162">
              <path d="M942 504H974C979 504 981 508 981 513L985 548L964 573C975 598 996 620 1021 633L1044 611L1081 616C1087 617 1089 620 1089 626V657C1089 663 1086 666 1080 666C1000 664 932 600 932 514C932 508 935 504 942 504Z" />
            </Icon>
          </HeaderButton>
          <HeaderButton type="button" $narrow aria-label="Más opciones">
            <Icon w={12} h={48} box="0 0 12 48">
              <circle cx="6" cy="6" r="6" />
              <circle cx="6" cy="24" r="6" />
              <circle cx="6" cy="42" r="6" />
            </Icon>
          </HeaderButton>
        </HeaderActions>
      </Header>

      <Chat>
        <Doodles />
        <ContactActions>
          <ContactAction type="button">BLOQUEAR</ContactAction>
          <Divider />
          <ContactAction type="button">AÑADIR</ContactAction>
        </ContactActions>

        <Conversation>
          <DateChip>11 DE FEBRERO DE 2019</DateChip>
          <Notice>
            <Icon w={29} h={34} box="402 540 82 99">
              <path d="M417 585V572C417 534 469 534 469 572V585" fill="none" stroke="#c9ae5a" strokeWidth="9" />
              <rect x="403" y="582" width="80" height="57" rx="12" />
            </Icon>
            {' '}Los mensajes y llamadas en este chat ahora están protegidos con cifrado de extremo a extremo. Toca para más información.
          </Notice>
          {groups.map((group, g) => (
            <MessageGroup key={g} $own={group.own}>
              {group.messages.map((message, i) => (
                <Message key={i} {...message} own={group.own} tail={i === 0} />
              ))}
            </MessageGroup>
          ))}
        </Conversation>

        <Composer onSubmit={e => e.preventDefault()}>
          <ComposerField>
            <button type="button" aria-label="Emojis">
              <Icon w={61} h={60} box="139 189 178 180">
                <ellipse cx="228" cy="279" rx="89" ry="90" fill="#a3a7aa" />
                <g fill="#2d383e">
                  <ellipse cx="200" cy="255" rx="13" ry="19" />
                  <ellipse cx="255" cy="255" rx="13" ry="19" />
                  <path d="M171 288C205 294 250 294 283 288C280 320 258 339 227 339C196 339 173 320 171 288Z" />
                </g>
                <path d="M181 299C210 304 245 304 271 299C265 322 188 322 181 299Z" fill="#a3a7aa" />
              </Icon>
            </button>
            <ComposerInput type="text" placeholder="Escribe un mensaje" aria-label="Escribe un mensaje" />
            <AttachButtons>
              <button type="button" aria-label="Adjuntar">
                <Icon w={63} h={56} box="418 194 184 169">
                  <path
                    d="M473 250L530 305C545 318 560 300 546 286L478 213C455 186 410 214 430 250L520 342C555 375 610 335 588 286L516 211"
                    fill="none"
                    stroke="#8a8f92"
                    strokeWidth="12"
                    strokeLinecap="round"
                  />
                </Icon>
              </button>
              <button type="button" aria-label="Cámara">
                <Icon w={59} h={55} box="807 186 172 165">
                  <path
                    fill="#a3a7aa"
                    d="M832 210C845 210 850 207 855 200C862 190 867 186 878 186H908C920 186 926 190 932 200C937 207 942 210 952 210C970 212 979 222 979 238V324C979 342 970 351 952 351H834C816 351 807 342 807 324V238C807 220 816 210 832 210Z"
                  />
                  <ellipse cx="893" cy="273" rx="36" ry="38" fill="#a3a7aa" stroke="#2d383e" strokeWidth="14" />
                </Icon>
              </button>
            </AttachButtons>
          </ComposerField>
          <MicButton type="button" aria-label="Grabar mensaje de voz">
            <Icon w={44} h={62} box="1263 187 128 185">
              <rect x="1301" y="187" width="52" height="111" rx="26" fill="#fff" />
              <path d="M1272 277C1272 342 1382 342 1382 277M1327 328V363" fill="none" stroke="#fff" strokeWidth="18" strokeLinecap="round" />
            </Icon>
          </MicButton>
        </Composer>
      </Chat>

      <NavBar>
        <NavButton type="button" aria-label="Volver">
          <Icon w={48} h={48} box="0 0 48 48">
            <path d="M38 1C41 -1 42 1 42 3V45C42 48 40 49 38 47L2 27C-1 25 -1 23 2 21Z" />
          </Icon>
        </NavButton>
        <NavButton type="button" aria-label="Inicio">
          <Icon w={84} h={84} box="0 0 84 84">
            <circle cx="42" cy="42" r="40" fill="none" stroke="currentColor" strokeWidth="4" />
            <circle cx="42" cy="42" r="21" />
          </Icon>
        </NavButton>
        <NavButton type="button" aria-label="Aplicaciones recientes">
          <Icon w={46} h={46} box="0 0 46 46">
            <rect width="46" height="46" rx="4" />
          </Icon>
        </NavButton>
      </NavBar>
    </Page>
  );
};

export default App;
